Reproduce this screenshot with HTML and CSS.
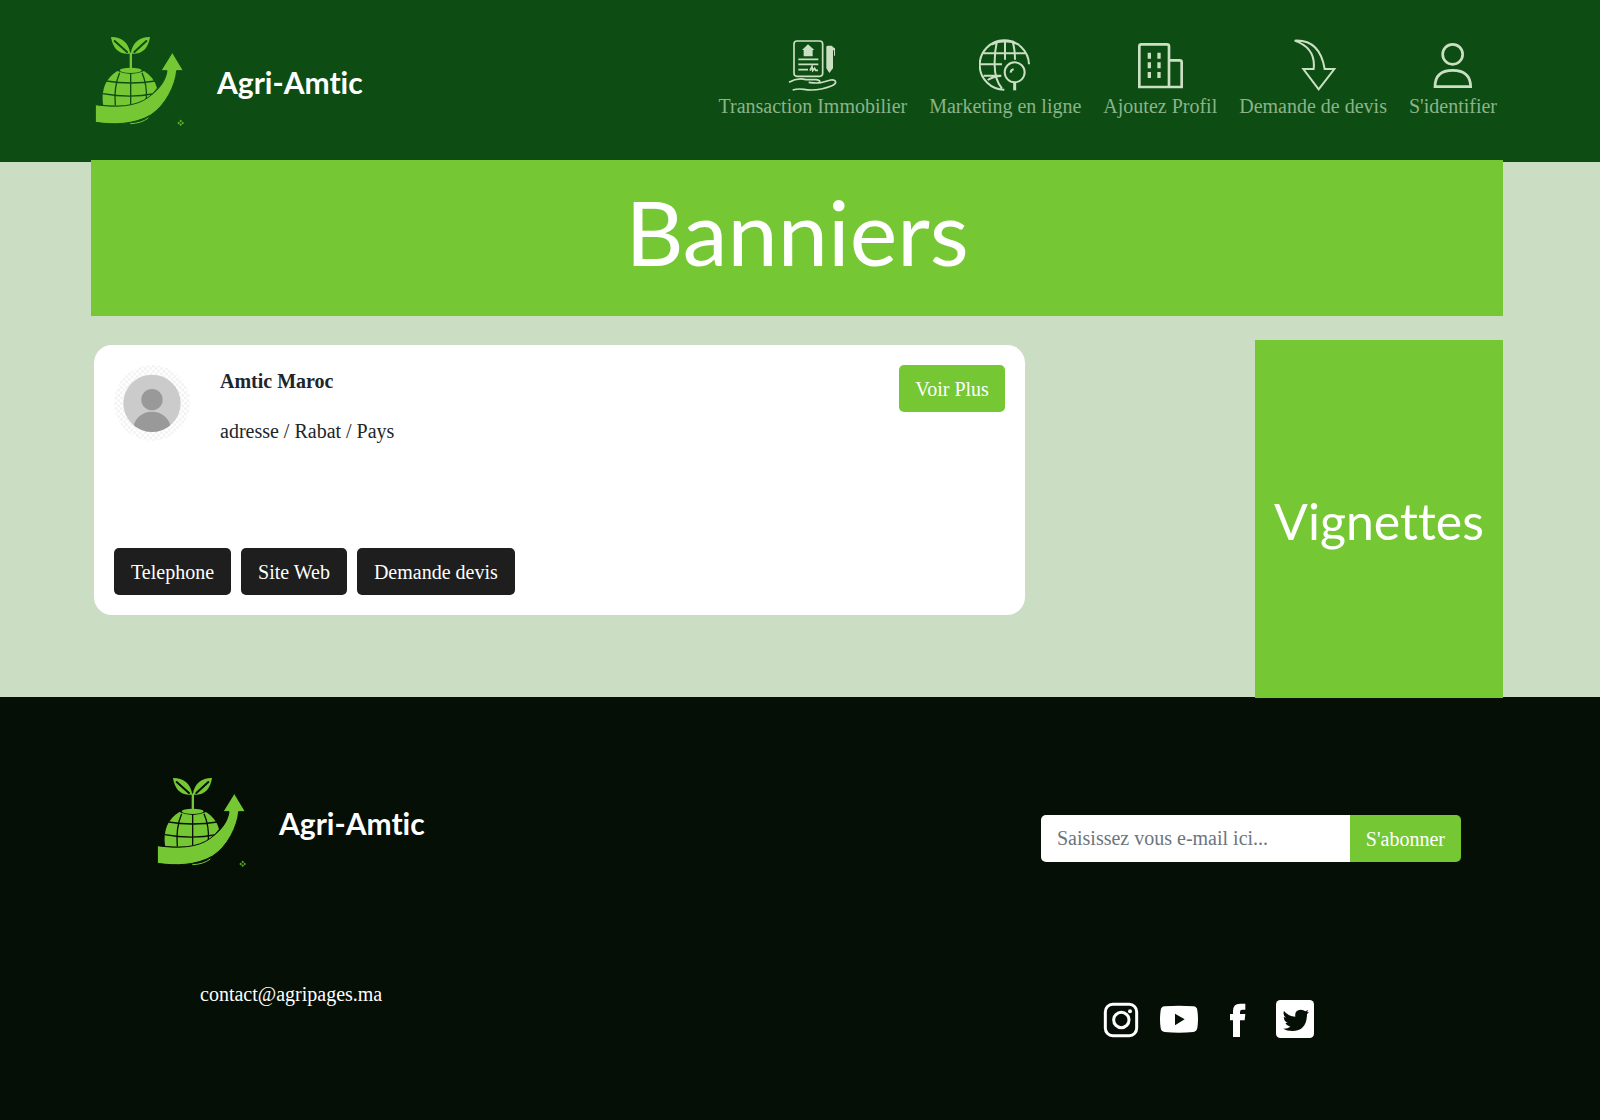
FILE: index.html
```html
<!DOCTYPE html>
<html lang="fr">
<head>
<meta charset="utf-8">
<meta name="viewport" content="width=device-width, initial-scale=1">
<title>Agri-Amtic</title>
<link rel="stylesheet" href="styles.css">
</head>
<body>
<svg class="sprite" aria-hidden="true">
  <symbol id="logo" viewBox="45 48 270 270">
    <g fill="#75c833">
      <path d="M93 51C121 50 146 65 151 101C118 105 98 86 93 51Z"/>
      <path d="M210 51C182 50 157 65 152 101C185 105 205 86 210 51Z"/>
      <path d="M149 98h7v48h-7z"/>
      <ellipse cx="152" cy="151" rx="33" ry="8"/>
      <path d="M112 153Q132 162 152 162Q174 162 192 153Q222 171 231 204Q204 246 152 256Q104 260 69 254Q60 185 112 153Z"/>
    </g>
    <g fill="none" stroke="var(--logo-back)" stroke-width="4">
      <path d="M104 63L141 96M199 63L163 96" stroke-width="6" stroke-linecap="round"/>
      <path d="M79 183Q152 195 226 183M68 221Q152 236 222 221M152 160V256M119 158Q101 200 106 256M186 158Q202 195 199 238"/>
    </g>
    <path fill="#75c833" stroke="var(--logo-back)" stroke-width="3" d="M46 254C110 263 168 260 205 232C243 203 257 180 261 152H243L277 97L310 152H290C286 196 257 256 212 285C163 314 99 315 46 307Z"/>
    <path d="M151 311Q184 310 205 294" fill="none" stroke="#75c833" stroke-width="3"/>
    <g fill="none" stroke="#75c833" stroke-width="3"><circle cx="302" cy="303" r="2"/><circle cx="302" cy="314" r="2"/><circle cx="296" cy="309" r="2"/><circle cx="308" cy="309" r="2"/></g>
  </symbol>
</svg>

<header class="site-header">
  <a class="brand" href="#">
    <svg class="brand-mark" aria-hidden="true"><use href="#logo"/></svg>
    <span class="brand-name">Agri-Amtic</span>
  </a>
  <nav class="site-nav">
    <a href="#">
      <svg class="nav-icon" viewBox="256 28 156 156" aria-hidden="true">
        <rect x="277" y="34" width="86" height="106" rx="9"/>
        <path class="solid" d="M319 44L338 61H333V80H306V61H301Z"/>
        <path d="M290 89H350M290 104H350M290 120H319M325 123L331 111L333 123L339 116L342 122H349"/>
        <path class="solid" d="M374 52Q374 48 379 48H389Q393 48 393 52L400 56V78H397V62H394V116L383 130L374 116Z"/>
        <path d="M262 158Q287 143 313 150H342Q356 151 354 158Q350 162 321 158M354 160L387 151Q401 149 402 157Q402 164 391 168Q345 186 307 179Q290 176 273 181"/>
      </svg>
      <span>Transaction Immobilier</span>
    </a>
    <a href="#">
      <svg class="nav-icon" viewBox="835 28 156 156" aria-hidden="true">
        <g stroke-width="6">
          <path d="M911 180A74 74 0 1 1 985 104M849 71H978M840 104H904M849 138H902M889 33Q881 70 882 106Q882 150 904 177M913 31V90M935 33Q943 58 943 90M872 45Q913 25 955 45M861 151Q882 139 900 139"/>
          <circle cx="942" cy="128" r="30"/><path d="M942 160V182" stroke-width="9"/><path d="M930 129Q931 120 939 119"/>
        </g>
      </svg>
      <span>Marketing en ligne</span>
    </a>
    <a href="#">
      <svg class="nav-icon" viewBox="130 28 156 156" aria-hidden="true">
        <g stroke-width="8"><path d="M146 172V50Q146 44 152 44H229Q235 44 235 50V172ZM235 92H267Q273 92 273 98V172H235"/></g>
        <path d="M176 69V87M176 98V116M176 127V145M205 69V87M205 98V116M205 127V145" stroke-width="10"/>
      </svg>
      <span>Ajoutez Profil</span>
    </a>
    <a href="#">
      <svg class="nav-icon" viewBox="588 28 156 156" aria-hidden="true">
        <path stroke-width="6" d="M611 33Q686 29 701 118H730L683 179L637 118H668Q675 55 611 33Z"/>
      </svg>
      <span>Demande de devis</span>
    </a>
    <a href="#">
      <svg class="nav-icon" viewBox="1009 28 156 156" aria-hidden="true">
        <g stroke-width="8"><circle cx="1086" cy="74" r="30"/><path d="M1033 171Q1033 122 1086 122Q1139 122 1140 171Z"/></g>
      </svg>
      <span>S'identifier</span>
    </a>
  </nav>
</header>

<main class="page">
  <section class="banner">Banniers</section>
  <div class="content">
    <article class="card">
      <div class="card-top">
        <svg class="avatar" viewBox="102 105 228 228" role="img" aria-label="Profil">
          <defs>
            <pattern id="checks" width="16" height="16" patternUnits="userSpaceOnUse"><path fill="#f3f3f3" d="M0 0h8v8H0zM8 8h8v8H8z"/></pattern>
            <clipPath id="disc"><circle cx="216" cy="220" r="86"/></clipPath>
          </defs>
          <circle cx="216" cy="219" r="114" fill="url(#checks)"/>
          <circle cx="216" cy="220" r="86" fill="#cbcbcb"/>
          <circle cx="216" cy="209" r="32" fill="#999"/>
          <ellipse cx="216" cy="300" rx="57" ry="55" fill="#999" clip-path="url(#disc)"/>
        </svg>
        <div class="card-info">
          <h2>Amtic Maroc</h2>
          <p>adresse / Rabat / Pays</p>
        </div>
        <button class="btn btn-green" type="button">Voir Plus</button>
      </div>
      <div class="card-actions">
        <button class="btn btn-dark" type="button">Telephone</button>
        <button class="btn btn-dark" type="button">Site Web</button>
        <button class="btn btn-dark" type="button">Demande devis</button>
      </div>
    </article>
    <aside class="vignette">Vignettes</aside>
  </div>
</main>

<footer class="site-footer">
  <div class="footer-brand">
    <a class="brand" href="#">
      <svg class="brand-mark" aria-hidden="true"><use href="#logo"/></svg>
      <span class="brand-name">Agri-Amtic</span>
    </a>
    <a class="contact" href="mailto:contact@agripages.ma">contact@agripages.ma</a>
  </div>
  <div class="footer-side">
    <form class="subscribe">
      <input type="email" aria-label="E-mail" placeholder="Saisissez vous e-mail ici...">
      <button class="btn btn-green" type="button">S'abonner</button>
    </form>
    <div class="social">
      <a href="#" aria-label="Instagram"><svg viewBox="64 60 114 114"><g fill="none" stroke="#fff" stroke-width="9"><rect x="74" y="73" width="94" height="94" rx="22"/><circle cx="122" cy="120" r="23"/></g><circle cx="148" cy="94" r="6" fill="#fff"/></svg></a>
      <a href="#" aria-label="YouTube"><svg viewBox="240 60 114 114"><path fill="#fff" fill-rule="evenodd" d="M254 79Q297 75 340 79Q351 80 352 91Q356 118 352 144Q350 154 340 156Q297 160 254 156Q243 154 242 144Q238 118 242 91Q243 80 254 79ZM285 101V136L314 118Z"/></svg></a>
      <a href="#" aria-label="Facebook"><svg viewBox="414 60 114 114"><path fill="#fff" d="M459 171V121H450V102H459V93Q459 71 480 71H496V89H487Q480 89 480 96V102H496L494 121H480V171Z"/></svg></a>
      <a href="#" aria-label="Twitter"><svg viewBox="588 60 114 114"><rect x="588" y="60" width="114" height="114" rx="13" fill="#fff"/><path fill="#050f06" d="M612 93Q626 110 646 110Q643 90 662 89Q671 89 676 94L685 90L681 97L687 96L681 103Q680 153 637 153Q621 153 609 146Q622 147 631 140Q620 138 616 129H623Q612 124 611 111L618 113Q607 104 612 93Z"/></svg></a>
    </div>
  </div>
</footer>
</body>
</html>
```
FILE: styles.css
```css
:root {
  --green: #75c833;
  --forest: #0d4d13;
  --night: #050f06;
  --sage: #cbddc3;
}

* { box-sizing: border-box; }

body {
  display: flex;
  flex-direction: column;
  min-height: 100vh;
  margin: 0;
  background: var(--sage);
  color: #212529;
  font: 20px/30px "Liberation Serif", "Times New Roman", serif;
}

a { color: inherit; text-decoration: none; }
h2, p { margin: 0; font-size: 20px; }

.sprite { position: absolute; width: 0; height: 0; }

.site-header {
  --logo-back: var(--forest);
  display: flex;
  justify-content: space-between;
  align-items: flex-start;
  padding: 36px 103px 36px 95px;
  background: var(--forest);
}

.brand { display: flex; align-items: center; gap: 32px; color: #fff; }
.brand-mark { width: 90px; height: 90px; }
.brand-name {
  padding-top: 2px;
  font: 700 30px/40px Lato, sans-serif;
  font-variant-ligatures: none;
}

.site-nav { display: flex; gap: 22px; padding-top: 3px; color: #8cb38a; }
.site-nav a { display: flex; flex-direction: column; align-items: center; }

.nav-icon { width: 52px; height: 52px; fill: none; stroke: #cbe0c3; stroke-width: 5; }
.nav-icon .solid { fill: #cbe0c3; stroke: none; }

.page { padding: 0 97px 0 91px; }

.banner, .vignette {
  display: flex;
  justify-content: center;
  align-items: center;
  background: var(--green);
  color: #fff;
  font-family: Lato, sans-serif;
  font-variant-ligatures: none;
}
.banner { height: 156px; margin-top: -2px; padding-bottom: 14px; font-size: 90px; }

.content {
  display: flex;
  justify-content: space-between;
  align-items: flex-start;
  margin: 24px 0 -1px;
}

.vignette {
  position: relative;
  z-index: 1;
  width: 248px;
  height: 358px;
  padding-top: 4px;
  font-size: 50px;
}

.card {
  display: flex;
  flex-direction: column;
  justify-content: space-between;
  width: calc(66% - 1px);
  min-height: 270px;
  margin: 5px 0 0 3px;
  padding: 20px;
  border-radius: 18px;
  background: #fff;
}
.card-top { display: flex; align-items: flex-start; gap: 30px; }
.avatar { width: 76px; height: 76px; }
.card-info { display: grid; flex: 1; gap: 20px; padding-top: 1px; }
.card-actions { display: flex; gap: 10px; }

.btn {
  height: 47px;
  padding: 0 17px;
  border: 0;
  border-radius: 5px;
  color: #fff;
  font: inherit;
}
.btn-green { padding: 0 16px; background: var(--green); }
.btn-dark { background: #1e1e1e; }

.site-footer {
  --logo-back: var(--night);
  display: flex;
  flex: 1;
  justify-content: space-between;
  padding: 80px 139px 80px 157px;
  background: var(--night);
  color: #fff;
}

.footer-brand { display: grid; align-content: start; gap: 112px; }
.contact { padding-left: 43px; }

.footer-side { width: 420px; padding-top: 38px; }
.subscribe { display: flex; }
.subscribe input {
  flex: 1;
  min-width: 0;
  height: 47px;
  padding: 0 16px;
  border: 0;
  border-radius: 5px 0 0 5px;
  background: #fff;
  font: inherit;
}
.subscribe input::placeholder { color: #6c757d; opacity: 1; }
.subscribe .btn { border-radius: 0 5px 5px 0; }

.social { display: flex; gap: 20px; padding: 138px 0 0 61px; }
.social svg { display: block; width: 38px; height: 38px; }
```
